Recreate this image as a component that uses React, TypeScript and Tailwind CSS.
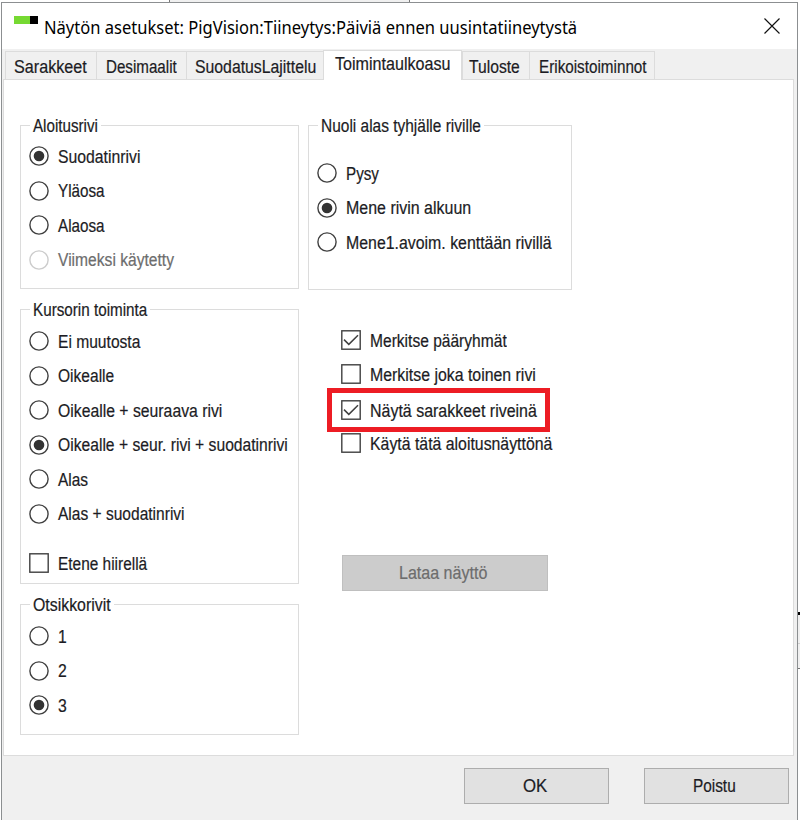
import { useLayoutEffect, useRef, useState } from "react";
import type { ReactNode } from "react";

/** Text condensed or widened horizontally so that it takes exactly `w` pixels. */
function Fit({ w, children, className = "" }: { w: number; children: string; className?: string }) {
  const ref = useRef<HTMLSpanElement>(null);
  const [scale, setScale] = useState(1);
  useLayoutEffect(() => {
    if (ref.current) setScale(w / ref.current.offsetWidth);
  }, [w]);
  return (
    <span className={`block shrink-0 whitespace-nowrap ${className}`} style={{ width: w }}>
      <span ref={ref} className="inline-block origin-left" style={{ transform: `scaleX(${scale})` }}>
        {children}
      </span>
    </span>
  );
}

type Option = { label: string; w: number; on?: boolean; disabled?: boolean };

function Radio({ label, w, on, disabled }: Option) {
  return (
    <div className={`flex h-[34.5px] items-center ${disabled ? "text-[#6d6d6d]" : ""}`}>
      <svg width="20" height="20" viewBox="0 0 20 20" className="mr-[9px] shrink-0">
        <circle cx="10" cy="10" r="9.1" fill="#fff" stroke={disabled ? "#cccccc" : "#404040"} strokeWidth="1.4" />
        {on && <circle cx="10" cy="10" r="5.3" fill="#333" />}
      </svg>
      <Fit w={w} className="pt-px">{label}</Fit>
    </div>
  );
}

function Check({ label, w, on }: Option) {
  return (
    <div className="flex h-[34px] items-center">
      <svg width="20" height="20" viewBox="0 0 20 20" className="mr-[9px] shrink-0">
        <rect x="0.8" y="0.8" width="18.4" height="18.4" fill="#fff" stroke="#404040" strokeWidth="1.4" />
        {on && <path d="M3 9.6 L7.8 14.4 L17 5.2" fill="none" stroke="#404040" strokeWidth="1.5" />}
      </svg>
      <Fit w={w} className="pt-px">{label}</Fit>
    </div>
  );
}

function Group({ title, w, className, children }: { title: string; w: number; className: string; children: ReactNode }) {
  return (
    <section className={`relative border border-[#dcdcdc] pl-[8px] ${className}`}>
      <h2 className="absolute -top-[11px] left-[9px] bg-white px-[3px] leading-[22px]">
        <Fit w={w}>{title}</Fit>
      </h2>
      {children}
    </section>
  );
}

const tabs = [
  { label: "Sarakkeet", w: 73, box: "w-[91px] pl-[8px]" },
  { label: "Desimaalit", w: 71, box: "w-[90px] pl-[9px]" },
  { label: "SuodatusLajittelu", w: 121, box: "w-[137px] pl-[8px]" },
  { label: "Toimintaulkoasu", w: 115, box: "w-[139px] pl-[11px]", active: true },
  { label: "Tuloste", w: 51, box: "w-[67px] pl-[6px]" },
  { label: "Erikoistoiminnot", w: 108, box: "w-[126px] pl-[9px]" },
];

const startRow: Option[] = [
  { label: "Suodatinrivi", w: 82, on: true },
  { label: "Yläosa", w: 47 },
  { label: "Alaosa", w: 47 },
  { label: "Viimeksi käytetty", w: 116, disabled: true },
];
const arrowDown: Option[] = [
  { label: "Pysy", w: 33 },
  { label: "Mene rivin alkuun", w: 125, on: true },
  { label: "Mene1.avoim. kenttään rivillä", w: 206 },
];
const cursor: Option[] = [
  { label: "Ei muutosta", w: 82 },
  { label: "Oikealle", w: 56 },
  { label: "Oikealle + seuraava rivi", w: 164 },
  { label: "Oikealle + seur. rivi + suodatinrivi", w: 230, on: true },
  { label: "Alas", w: 30 },
  { label: "Alas + suodatinrivi", w: 127 },
];
const headerRows: Option[] = [
  { label: "1", w: 9 },
  { label: "2", w: 9 },
  { label: "3", w: 9, on: true },
];

export default function App() {
  return (
    <div className="flex h-[820px] w-[800px] flex-col overflow-hidden bg-white font-['Liberation_Sans',Arial,sans-serif] text-[17.5px] leading-[22px] text-[#1c1c24]">
      <div className="flex h-[2px] shrink-0">
        <div className="w-[169px] bg-white" />
        <div className="w-px bg-[#777]" />
        <div className="w-[239px] bg-[#f0f0f0]" />
        <div className="w-px bg-[#777]" />
        <div className="flex-1 bg-white" />
      </div>
      <div className="flex min-h-0 flex-1">
        <div className="w-px bg-white" />
        <main className="flex w-[797px] flex-col border-x border-t border-[#8c8f91] bg-[#f0f0f0] [-webkit-text-stroke:0.2px]">
          <header className="flex h-[46px] shrink-0 bg-white [-webkit-text-stroke:0px]">
            <div className="mt-[13px] ml-[12px] flex h-[8px] w-[24px] shrink-0">
              <div className="w-[16px] bg-[#76d932]" />
              <div className="flex-1 bg-black" />
            </div>
            <h1 className="mt-[12px] ml-[6px] font-['Noto_Sans','Open_Sans',sans-serif] text-[17.5px] leading-[24px] text-black">
              <Fit w={533}>Näytön asetukset: PigVision:Tiineytys:Päiviä ennen uusintatiineytystä</Fit>
            </h1>
            <svg width="16" height="16" viewBox="0 0 16 16" className="mt-[15px] mr-[17px] ml-auto">
              <path d="M0.5 0.5 L15.5 15.5 M15.5 0.5 L0.5 15.5" stroke="#111" strokeWidth="1.15" />
            </svg>
          </header>
          <nav className="flex h-[30px] shrink-0 items-end pl-[3px]">
            {tabs.map((t) =>
              t.active ? (
                <div key={t.label} className={`relative z-10 -mb-px h-[30px] border-x border-t border-[#dcdcdc] bg-white pt-[2px] ${t.box}`}>
                  <Fit w={t.w}>{t.label}</Fit>
                </div>
              ) : (
                <div key={t.label} className={`h-[28px] border-t border-l border-[#dcdcdc] pt-[4px] last:border-r ${t.box}`}>
                  <Fit w={t.w}>{t.label}</Fit>
                </div>
              ),
            )}
          </nav>
          <div className="ml-px flex h-[677px] w-[791px] shrink-0 border border-[#dcdcdc] bg-white pt-[45px] pl-[16px]">
            <div className="w-[279px]">
              <Group title="Aloitusrivi" w={65} className="h-[164px] pt-[13px]">
                {startRow.map((o) => <Radio key={o.label} {...o} />)}
              </Group>
              <Group title="Kursorin toiminta" w={114} className="mt-[20px] h-[275px] pt-[14px]">
                {cursor.map((o) => <Radio key={o.label} {...o} />)}
                <div className="mt-[15px]"><Check label="Etene hiirellä" w={89} /></div>
              </Group>
              <Group title="Otsikkorivit" w={78} className="mt-[20px] h-[131px] pt-[14px]">
                {headerRows.map((o) => <Radio key={o.label} {...o} />)}
              </Group>
            </div>
            <div className="ml-[9px] w-[264px]">
              <Group title="Nuoli alas tyhjälle riville" w={160} className="h-[165px] pt-[30px]">
                {arrowDown.map((o) => <Radio key={o.label} {...o} />)}
              </Group>
              <div className="mt-[33px] pl-[33px]">
                <Check label="Merkitse pääryhmät" w={137} on />
                <Check label="Merkitse joka toinen rivi" w={166} />
                <div className="relative mt-[2px] -mb-px">
                  <Check label="Näytä sarakkeet riveinä" w={167} on />
                  <div className="absolute -top-[5px] -left-[14px] h-[44px] w-[223px] border-[5px] border-[#ed1c24]" />
                </div>
                <Check label="Käytä tätä aloitusnäyttönä" w={182} />
              </div>
              <button className="mt-[95px] ml-[34px] flex h-[36px] w-[206px] items-center justify-center border border-[#bfbfbf] bg-[#cccccc] pr-[4px] text-[#6d6d6d]">
                <Fit w={88}>Lataa näyttö</Fit>
              </button>
            </div>
          </div>
          <footer className="flex justify-end gap-[35px] pt-[12px] pr-[8px]">
            <button className="flex h-[36px] w-[145px] items-center justify-center border border-[#adadad] bg-[#e1e1e1] pr-[4px]">
              <Fit w={24}>OK</Fit>
            </button>
            <button className="flex h-[36px] w-[145px] items-center justify-center border border-[#adadad] bg-[#e1e1e1] pr-[4px]">
              <Fit w={43}>Poistu</Fit>
            </button>
          </footer>
        </main>
        <div className="flex flex-1 flex-col pt-[610px]">
          <div className="h-[3px] bg-black" />
          <div className="h-[28px] bg-[#f0f0f0]" />
          <div className="h-px bg-[#d0d0d0]" />
          <div className="h-[24px] bg-[#f0f0f0]" />
          <div className="h-px bg-[#777]" />
        </div>
      </div>
    </div>
  );
}
